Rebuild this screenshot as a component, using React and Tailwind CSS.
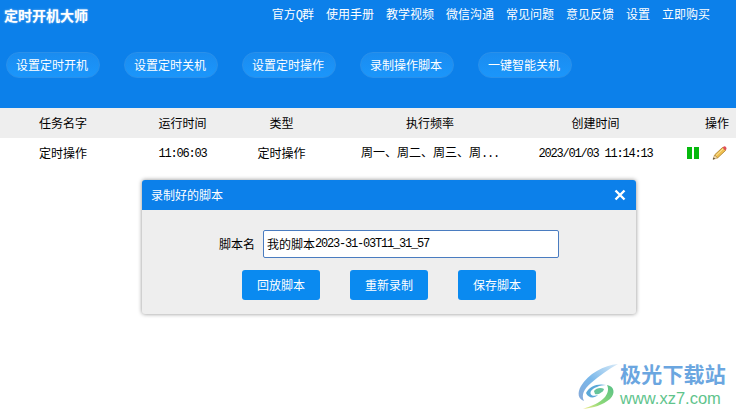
const cjk = { fontFamily: '"Noto Sans CJK SC", "Liberation Sans", sans-serif' }

const navItems = [['官方', 'Q', '群'], ['使用手册'], ['教学视频'], ['微信沟通'], ['常见问题'], ['意见反馈'], ['设置'], ['立即购买']]
const actions = ['设置定时开机', '设置定时关机', '设置定时操作', '录制操作脚本', '一键智能关机']

function Num({ children }) {
  return (
    <span className="font-['Liberation_Mono',monospace] text-[12px] tracking-[-1.2px]">{children}</span>
  )
}

function PencilIcon() {
  return (
    <svg width="15" height="14" viewBox="0 0 15 14">
      <path d="M2.5 9 L10.5 1.5 L13.5 4.5 L5.5 12 Z" fill="#f0c050" stroke="#a87c28" strokeWidth="0.8" />
      <path d="M4 9.5 L11.5 2.5" stroke="#fbe6a0" strokeWidth="1" />
      <path d="M10.5 1.5 L11.8 0.4 Q12.6 0 13.4 0.6 L14.4 1.8 Q14.8 2.6 14.2 3.4 L13.5 4.5 Z" fill="#e0505a" />
      <path d="M2.5 9 L1 13.4 L5.5 12 Z" fill="#f3dcb4" stroke="#a87c28" strokeWidth="0.5" />
      <path d="M1.7 11.4 L1 13.4 L3 12.8 Z" fill="#333" />
    </svg>
  )
}

function Logo() {
  return (
    <svg width="46" height="50" viewBox="0 0 46 50" className="shrink-0">
      <defs>
        <linearGradient id="swirlBlue" x1="1" y1="0" x2="0" y2="1">
          <stop offset="0" stopColor="#d8eaf8" />
          <stop offset="0.55" stopColor="#7ab8ea" />
          <stop offset="1" stopColor="#86a8d8" />
        </linearGradient>
        <linearGradient id="swirlGreen" x1="1" y1="0" x2="0" y2="1">
          <stop offset="0" stopColor="#58c088" />
          <stop offset="0.6" stopColor="#8cd878" />
          <stop offset="1" stopColor="#f4ec90" />
        </linearGradient>
      </defs>
      <path d="M42 3 C28 4 12 13 5 25 C1 32 2 38 8 40 C5 34 8 28 15 22 C23 15 33 8 42 3 Z" fill="url(#swirlBlue)" />
      <path d="M10 32 C13 25 22 22 30 24 C24 24 17 27 15 30 C13 34 17 36 22 34 C18 38 12 37 10 32 Z" fill="#5aa8d8" />
      <path d="M31 24 C38 25 40 32 34 38 C27 44 17 47 7 48 C15 45 24 42 29 36 C32 32 33 28 31 24 Z" fill="url(#swirlGreen)" />
      <path d="M18 30 C20 27 25 26 28 28 C27 32 21 34 19 33 Z" fill="#66c49a" />
    </svg>
  )
}

export default function App() {
  return (
    <div className="relative h-[412px] w-[736px] overflow-hidden bg-white text-[12px] leading-[16px] text-black" style={cjk}>
      <div className="h-[108px] bg-[#0c80ea] text-white">
        <div className="flex h-[29px] items-center justify-between pl-[4px] pr-[26px]">
          <div className="text-[14px] font-bold [text-shadow:0_0_2px_rgba(255,255,255,0.6)]">定时开机大师</div>
          <div className="flex gap-[12px]">
            {navItems.map(([first, q, last]) => (
              <span key={first}>
                {first}
                {q && <Num>{q}</Num>}
                {last}
              </span>
            ))}
          </div>
        </div>
        <div className="mt-[23px] flex gap-[24px] pl-[6px]">
          {actions.map((label) => (
            <button
              key={label}
              className="h-[26px] w-[94px] rounded-full border border-[#2a90ea] bg-gradient-to-b from-[#1a8cf0] to-[#1b96fb] pr-[2px] text-white"
            >
              {label}
            </button>
          ))}
        </div>
      </div>

      <div className="grid h-[30px] grid-cols-[126px_113px_85px_212px_119px_81px] items-center bg-[#eeeeee] text-center">
        <div>任务名字</div>
        <div>运行时间</div>
        <div>类型</div>
        <div>执行频率</div>
        <div>创建时间</div>
        <div className="pr-[7px] text-right">操作</div>
      </div>
      <div className="grid h-[30px] grid-cols-[126px_113px_85px_212px_119px_81px] items-center text-center">
        <div>定时操作</div>
        <div><Num>11:06:03</Num></div>
        <div>定时操作</div>
        <div>周一、周二、周三、周<Num>...</Num></div>
        <div className="whitespace-nowrap"><Num>2023/01/03 11:14:13</Num></div>
        <div className="flex items-center justify-end gap-[13px] pr-[9px]">
          <div className="flex gap-[2px]">
            <div className="h-[12px] w-[5px] bg-[#06b90e]" />
            <div className="h-[12px] w-[5px] bg-[#06b90e]" />
          </div>
          <PencilIcon />
        </div>
      </div>

      <div className="absolute left-[142px] top-[180px] w-[494px] overflow-hidden rounded-[3px] bg-[#eeeeee] shadow-[0_0_4px_rgba(0,0,0,0.45)]">
        <div className="flex h-[30px] items-center justify-between bg-[#0c80ea] pl-[9px] pr-[10px] text-white">
          <span>录制好的脚本</span>
          <svg width="12" height="12" viewBox="0 0 12 12">
            <path d="M1.5 1.5 L10.5 10.5 M10.5 1.5 L1.5 10.5" stroke="white" strokeWidth="2.4" />
          </svg>
        </div>
        <div className="pb-[14px] pt-[20px]">
          <div className="flex items-center justify-center gap-[8px]">
            <span>脚本名</span>
            <div className="flex h-[28px] w-[296px] items-center rounded-[2px] border border-[#4a7cc0] bg-white pl-[3px]">
              我的脚本<Num>2023-31-03T11_31_57</Num>
            </div>
          </div>
          <div className="mt-[12px] flex justify-center gap-[30px]">
            {['回放脚本', '重新录制', '保存脚本'].map((label) => (
              <button key={label} className="h-[30px] w-[78px] rounded-[3px] bg-[#0a8af0] text-white">
                {label}
              </button>
            ))}
          </div>
        </div>
      </div>

      <div className="absolute left-[576px] top-[361px] flex items-start">
        <Logo />
        <div className="ml-[-2px] mt-[1px] flex flex-col">
          <span className="text-[21px] font-bold leading-[22px] tracking-[0.2px] text-[#6ba6e0]">极光下载站</span>
          <span className="mt-[6px] font-['Liberation_Sans',sans-serif] text-[16.5px] leading-[16px] text-[#5fc48c]">www.xz7.com</span>
        </div>
      </div>
    </div>
  )
}
